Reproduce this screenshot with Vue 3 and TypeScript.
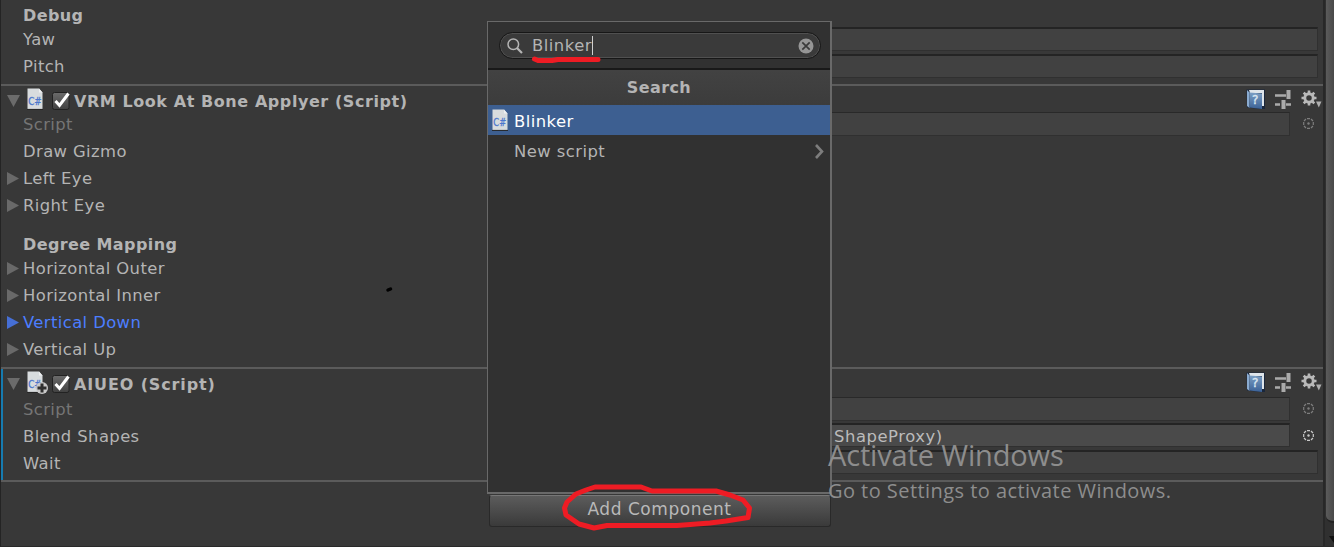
<script setup lang="ts">
interface Row {
  label: string
  kind: 'foldout' | 'number' | 'object' | 'plain'
  dim?: boolean
  active?: boolean
  value?: string
}
interface Component {
  title: string
  added: boolean
  groups: { heading?: string; rows: Row[] }[]
}

const debugRows: Row[] = [
  { label: 'Yaw', kind: 'number' },
  { label: 'Pitch', kind: 'number' },
]
const components: Component[] = [
  {
    title: 'VRM Look At Bone Applyer (Script)',
    added: false,
    groups: [
      {
        rows: [
          { label: 'Script', kind: 'object', dim: true },
          { label: 'Draw Gizmo', kind: 'plain' },
          { label: 'Left Eye', kind: 'foldout' },
          { label: 'Right Eye', kind: 'foldout' },
        ],
      },
      {
        heading: 'Degree Mapping',
        rows: [
          { label: 'Horizontal Outer', kind: 'foldout' },
          { label: 'Horizontal Inner', kind: 'foldout' },
          { label: 'Vertical Down', kind: 'foldout', active: true },
          { label: 'Vertical Up', kind: 'foldout' },
        ],
      },
    ],
  },
  {
    title: 'AIUEO (Script)',
    added: true,
    groups: [
      {
        rows: [
          { label: 'Script', kind: 'object', dim: true },
          { label: 'Blend Shapes', kind: 'object', value: 'ShapeProxy)' },
          { label: 'Wait', kind: 'number' },
        ],
      },
    ],
  },
]
</script>

<template>
  <div class="window">
    <svg class="defs" width="0" height="0">
      <defs>
        <linearGradient id="book" x1="0" y1="0" x2="0" y2="1">
          <stop offset="0" stop-color="#7c9fc4" /><stop offset="1" stop-color="#3b6196" />
        </linearGradient>
        <linearGradient id="box" x1="0" y1="0" x2="0" y2="1">
          <stop offset="0" stop-color="#6b6b6b" /><stop offset="1" stop-color="#414141" />
        </linearGradient>
        <symbol id="file" viewBox="0 0 16 22">
          <path d="M.5 .5H12L15.5 4.500V21H.5Z" fill="#d8dcde" />
          <path d="M12 .5L15.500 4.500H12Z" fill="#eef0f1" />
          <path d="M0 21.400H16" stroke="#252525" />
          <text x="1.2" y="17" font-size="11" textLength="13.500" lengthAdjust="spacingAndGlyphs" fill="#4c77cd" stroke="#4c77cd" stroke-width=".3">C#</text>
        </symbol>
      </defs>
    </svg>

    <main class="inspector">
      <section class="debug">
        <h3 class="heading">Debug</h3>
        <div v-for="row in debugRows" :key="row.label" class="row">
          <span class="label">{{ row.label }}</span>
          <span class="field"></span>
        </div>
      </section>

      <section v-for="item in components" :key="item.title" class="component" :class="{ added: item.added }">
        <header class="title">
          <svg class="fold" width="13" height="12"><path d="M0 0H13L6.500 12Z" fill="#6b6b6b" /></svg>
          <span class="script-icon">
            <svg width="16" height="22"><use href="#file" /></svg>
            <svg v-if="item.added" class="plus" width="12" height="12" viewBox="0 0 12 12">
              <circle cx="6" cy="6" r="6" fill="#c9c9c9" /><path d="M6 1.500V10.500M1.500 6H10.500" stroke="#303030" stroke-width="3" />
            </svg>
          </span>
          <svg class="check" width="20" height="21" viewBox="0 0 20 21">
            <rect x="1.500" y="2.500" width="16.500" height="17" rx="2" fill="url(#box)" stroke="#222" />
            <path d="M4.500 11L8.500 15.500L17.500 3.500" fill="none" stroke="#fff" stroke-width="3" />
          </svg>
          <h2 class="name">{{ item.title }}</h2>
          <svg class="tool book" width="20" height="21" viewBox="0 0 20 21">
            <path d="M.5 .5H19V20H14L1 18.500Z" fill="#1b273b" />
            <path d="M3 1H18V17H16V4H4Z" fill="#dfe5ea" />
            <path d="M1 1L3.500 3.500V19L1 17Z" fill="#8aabd0" />
            <path d="M3.500 3.500L16 4.500V20L3.500 18.500Z" fill="url(#book)" />
            <text x="6" y="15" font-size="12" fill="#dce7f2" stroke="#dce7f2" stroke-width=".4">?</text>
          </svg>
          <svg class="tool sliders" width="16" height="19" viewBox="0 0 16 19">
            <path d="M0 5.500H11M0 14.500H5M11 14.500H16" stroke="#aaa" stroke-width="2.300" />
            <path d="M13.500 0V9M8.500 10V19" stroke="#aaa" stroke-width="4" />
          </svg>
          <svg class="tool gear" width="21" height="19" viewBox="0 0 21 19">
            <circle cx="8" cy="8" r="4.200" fill="none" stroke="#b9b9b9" stroke-width="2.900" />
            <path d="M8 .5V3M8 13V15.500M.5 8H3M13 8H15.500M2.700 2.700L4.500 4.500M11.500 11.500L13.300 13.300M13.300 2.700L11.500 4.500M4.500 11.500L2.700 13.300" stroke="#b9b9b9" stroke-width="2.600" />
            <path d="M15 11.500H20.500L17.800 17.500Z" fill="#b0b0b0" />
          </svg>
        </header>

        <template v-for="group in item.groups" :key="group.heading ?? 'main'">
          <h3 v-if="group.heading" class="heading inner">{{ group.heading }}</h3>
          <div v-for="row in group.rows" :key="row.label" class="row" :class="[row.kind, { dim: row.dim, active: row.active }]">
            <svg v-if="row.kind === 'foldout'" class="arrow" width="12" height="13"><path d="M0 0L12 6.500L0 13Z" fill="currentColor" /></svg>
            <span class="label">{{ row.label }}</span>
            <span v-if="row.kind === 'object' || row.kind === 'number'" class="field" :class="{ filled: row.value }">{{ row.value }}</span>
            <svg v-if="row.kind === 'object'" class="picker" width="11" height="11" viewBox="0 0 11 11">
              <path d="M4 .7H7M4 10.300H7M.7 4V7M10.300 4V7M1 3L3 1M8 1L10 3M10 8L8 10M3 10L1 8" stroke="currentColor" stroke-width="1.200" />
              <circle cx="5.500" cy="5.500" r="1.200" fill="currentColor" />
            </svg>
          </div>
        </template>
      </section>
      <div class="end-line"></div>
    </main>

    <aside class="scrollbar">
      <div class="thumb"></div>
      <svg class="scroll-arrow" width="10" height="8"><path d="M5 0H15L10 7Z" fill="#111" /></svg>
    </aside>

    <div class="popup">
      <div class="search-area">
        <div class="search">
          <svg width="16" height="16" viewBox="0 0 16 16" fill="none" stroke="#b4b4b4">
            <circle cx="6.300" cy="6.300" r="5.300" stroke-width="1.500" /><path d="M10 10L15 15" stroke-width="2.200" />
          </svg>
          <span class="query">Blinker</span><i class="caret"></i>
          <svg class="clear" width="16" height="16" viewBox="0 0 16 16">
            <circle cx="8" cy="8" r="7.500" fill="#969696" /><path d="M4.300 4.300L11.700 11.700M11.700 4.300L4.300 11.700" stroke="#3a3a3a" stroke-width="1.700" />
          </svg>
        </div>
      </div>
      <div class="popup-title">Search</div>
      <div class="option selected">
        <svg width="16" height="22"><use href="#file" /></svg><span>Blinker</span>
      </div>
      <div class="option">
        <span class="indent">New script</span>
        <svg class="chevron" width="9" height="15"><path d="M1 1L7 7.500L1 14" fill="none" stroke="#7d7d7d" stroke-width="2.600" /></svg>
      </div>
    </div>
    <button class="add">Add Component</button>

    <div class="watermark">
      <p class="big">Activate Windows</p>
      <p class="small">Go to Settings to activate Windows.</p>
    </div>

    <svg class="ink" width="1334" height="547" fill="none" stroke="#ee1c24" stroke-linecap="round" stroke-linejoin="round">
      <path d="M534.500 59L538 60.500H552L558 59.500H598" stroke-width="5" />
      <path d="M641 487H595L586 490L576 494L567 502L564.500 508L566 515L579 524L594 528L607 525.500H677L710 523L726 521L748 517.500L749.500 508L743 500L730 495L716 491H652L641 487" stroke-width="5" />
      <path d="M388 290L390.500 289" stroke="#000" stroke-width="3.500" />
    </svg>
  </div>
</template>

<style>
body { background: #383838; overflow: hidden; }
</style>

<style scoped>
* { box-sizing: border-box; }
.window { position: relative; display: flex; width: 1334px; height: 547px; overflow: hidden; background: #383838; color: #b4b4b4; font: 16.4px/20px "DejaVu Sans", sans-serif; border-bottom: 1px solid #292929; border-left: 1px solid #242424; }
.defs { position: absolute; }
.inspector { flex: 1; min-width: 0; }
.debug { height: 84px; padding-top: 4px; }
h2, h3, p { margin: 0; }
.heading { height: 22px; padding-left: 22px; font-size: 16px; line-height: 23px; letter-spacing: .4px; }
.heading.inner { height: 24px; margin-top: 12px; line-height: 27px; }
.row { display: flex; height: 27px; position: relative; padding-left: 22px; line-height: 27px; }
.label { width: 478px; flex: none; letter-spacing: .4px; }
.foldout { padding-left: 6px; }
.arrow { margin: 7px 4px 0 0; color: #696969; flex: none; }
.active { color: #4c7eff; }
.active .arrow { color: #466fd5; }
.dim { color: #757575; }
.field { flex: 1; height: 24px; margin: 1px 5px 0 0; background: #414141; border: 1px solid #303030; border-top: 2px solid #242424; line-height: 24px; padding-left: 332px; color: #bbb; letter-spacing: .55px; }
.number .field { margin-top: 0; }
.object .field { margin-right: 12px; }
.dim .field { border-top: 1px solid #292929; }
.field.filled { background: #4a4a4a; margin-top: 0; }
.picker { margin: 7px 9px 0 1px; color: #c8c8c8; }
.dim .picker { color: #7d7d7d; }
.component { border-top: 2px solid #5b5b5b; height: 283px; width: 1322px; }
.component.added { height: 113px; position: relative; }
.component.added::before { content: ""; position: absolute; left: 0; top: 0; width: 2px; height: 111px; background: #167bb0; }
.title { height: 25px; display: flex; }
.added .title { height: 27px; }
.fold { margin: 9px 7px 0 6px; }
.script-icon { position: relative; width: 24px; padding-top: 2px; line-height: 0; }
.plus { position: absolute; left: 9px; top: 13px; }
.check { margin-top: 4px; }
.name { margin: 5px auto 0 3px; font-size: 16px; line-height: 21px; letter-spacing: .57px; }
.added .name { letter-spacing: .87px; }
.book { margin: 3px 9px 0 1px; }
.sliders { margin: 4px 10px 0 0; }
.gear { margin: 4px 1px 0 0; }
.end-line { height: 2px; background: #5b5b5b; }
.scrollbar { width: 11px; background: #303030; border-left: 2px solid #282828; position: relative; }
.thumb { height: 523px; background: linear-gradient(90deg, #5b5b5b, #494949); border-bottom-left-radius: 7px; border-bottom: 2px solid #222; margin-left: 1px; }
.scroll-arrow { position: absolute; right: 0; bottom: 2px; }
.popup { position: absolute; left: 486px; top: 21px; width: 345px; height: 473px; background: #313131; border: 2px solid #696969; border-top-width: 1px; border-left-width: 1px; }
.search-area { height: 48px; padding: 10px 9px 0 11px; border-bottom: 2px solid #191919; }
.search { height: 27px; border: 1px solid #171717; border-radius: 14px; background: #3a3a3a; box-shadow: inset 0 0 0 1px #505050; display: flex; align-items: center; padding: 0 6px 0 7px; }
.query { margin-left: 9px; letter-spacing: .5px; }
.caret { width: 1px; height: 19px; background: #d0d0d0; }
.clear { margin-left: auto; }
.popup-title { height: 35px; background: linear-gradient(#424242, #3c3c3c); text-align: center; line-height: 35px; font-size: 16px; font-weight: bold; letter-spacing: .4px; }
.option { height: 30px; padding-left: 4px; display: flex; align-items: center; letter-spacing: .45px; }
.option span { margin: 3px 0 0 6px; }
.option .indent { margin: 3px 0 0 22px; }
.selected { background: #3d5f91; color: #fff; }
.chevron { margin: 2px 6px 0 auto; }
.add { position: absolute; left: 488px; top: 495px; width: 342px; height: 32px; border: 1px solid #292929; border-top-color: #777; border-radius: 3px; background: linear-gradient(#5c5c5c, #3a3a3a); color: #b9b9b9; font: 17px "DejaVu Sans", sans-serif; letter-spacing: .55px; padding: 0 1px 4px 0; }
.watermark { position: absolute; left: 827px; top: 437px; color: #8d8d8d; font-family: "Open Sans", sans-serif; white-space: nowrap; }
.big { font-size: 29px; line-height: 36px; letter-spacing: -.15px; }
.small { font-size: 20px; line-height: 30px; margin-top: 3px; letter-spacing: .45px; }
.ink { position: absolute; left: -1px; top: 0; }
</style>
